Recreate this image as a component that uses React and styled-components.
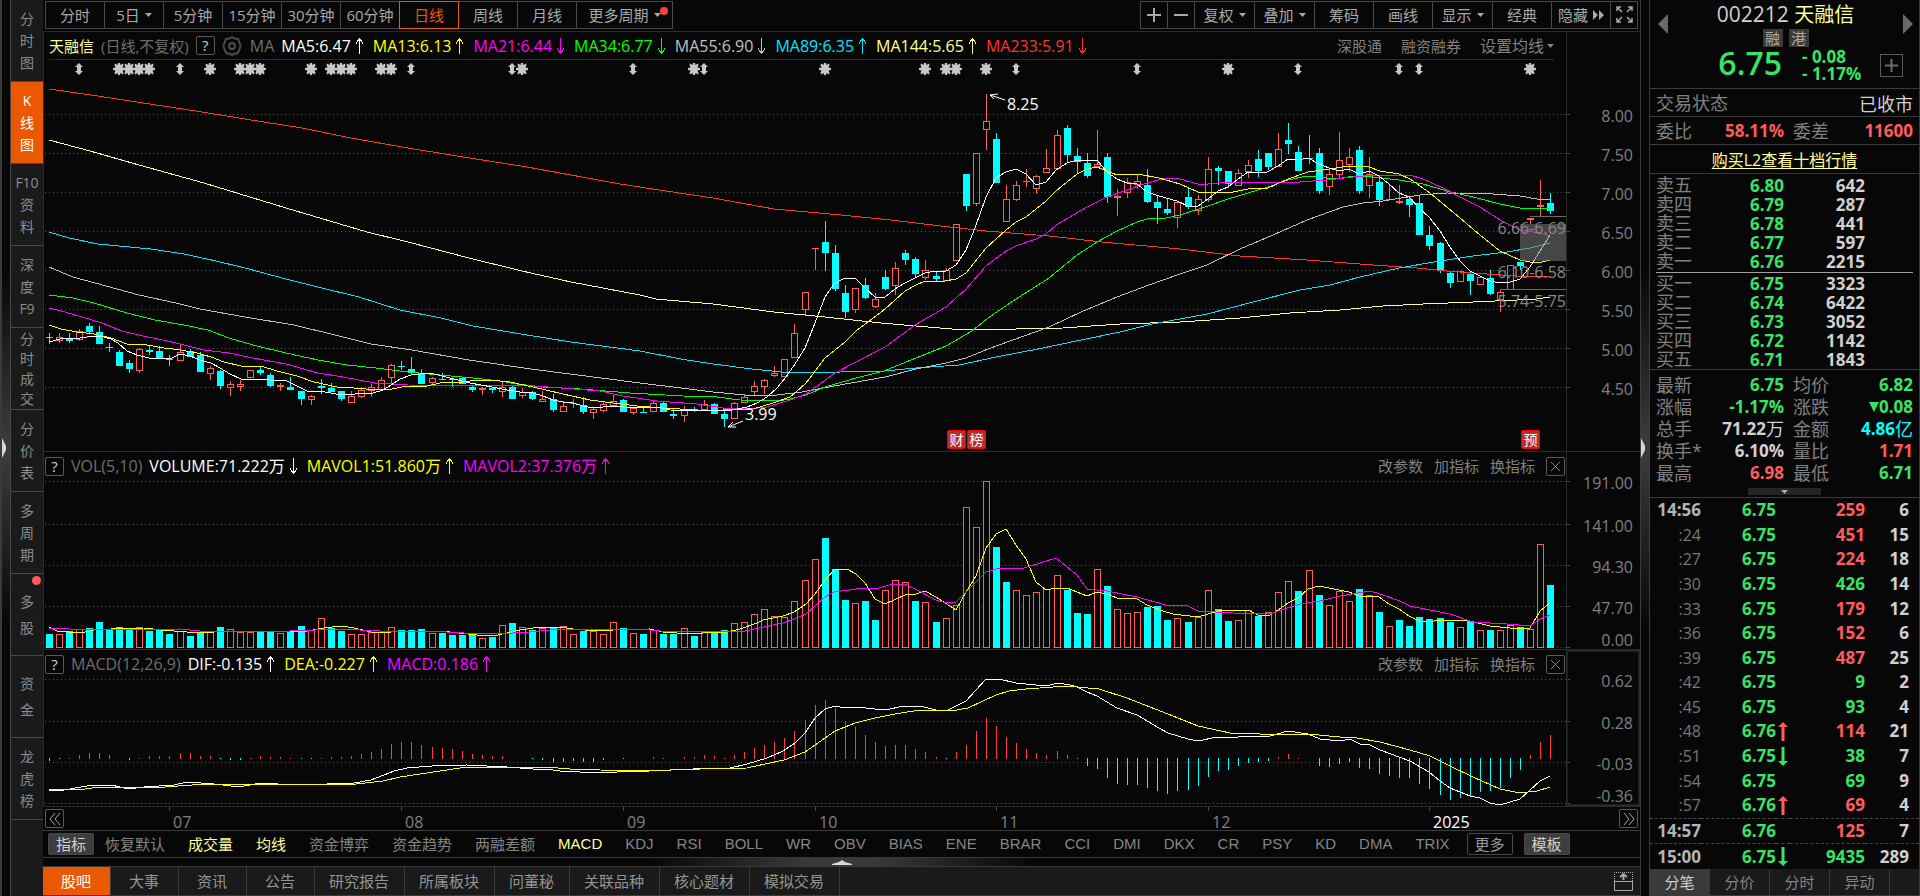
import React from 'react';
import styled, { createGlobalStyle, css } from 'styled-components';

const color = {
  bg: '#070707',
  panel: '#1a1a1a',
  line: '#2b2b2b',
  border: '#484848',
  text: '#a9a9a9',
  muted: '#808080',
  light: '#d0d0d0',
  white: '#ffffff',
  orange: '#eb5802',
  red: '#ff5c5c',
  green: '#3ae366',
  cyan: '#00ffff',
  yellow: '#ffff00',
  pale: '#ffff96',
  magenta: '#ff00ff',
};

// candles: [direction, high, body top, body bottom, low]
const CANDLES = `
d333,337,338,344 u333,337,341,343 d333,338,341,343 u329,331,340,341 d323,326,332,333 d326,332,344,344 d343,347,348,352
d350,352,366,366 d360,363,369,373 u348,349,371,373 d346,350,352,355 d346,351,358,359 d355,359,360,366 u344,352,361,361
d349,351,357,357 d352,355,372,372 u366,368,374,380 d370,371,386,389 u381,384,388,396 u380,384,387,391 u370,370,378,378
d366,370,373,375 d373,375,386,387 u383,385,387,391 d377,387,390,390 d391,391,399,405 u395,396,400,405 d379,386,388,394
d383,388,392,392 d391,391,399,401 u391,396,403,403 u387,390,397,398 u384,387,391,397 u377,380,390,390 u364,365,378,384
d361,366,367,370 d357,369,373,374 d369,373,384,384 u377,378,383,384 d373,379,380,380 d378,379,380,387 d378,378,384,384
d385,387,390,392 u387,388,390,395 d387,388,390,393 u382,387,392,397 d386,387,399,399 u388,392,396,398 d391,392,399,400
u391,399,402,402 d394,399,410,412 u401,406,412,412 u399,403,404,408 d397,405,412,414 u407,409,413,419 u402,404,411,412
u395,401,406,406 d399,400,412,412 u407,408,413,415 d406,412,413,413 u400,403,412,412 d402,403,412,412 d409,414,416,419
u406,409,416,422 d407,409,410,412 u400,404,410,410 d403,404,414,414 d411,414,419,427 u402,403,419,419 u395,397,403,403
u381,386,392,396 u379,380,387,394 u366,373,376,377 u359,359,377,377 u324,333,358,358 u292,292,310,315 u248,248,249,270
d221,242,253,271 d245,253,289,291 d285,293,312,318 u288,288,310,313 d278,285,298,299 u293,299,307,308 d270,277,289,290
u262,268,286,295 d250,253,260,265 d257,259,274,278 u260,270,278,280 d272,276,279,282 u268,270,281,281 u224,224,261,261
d174,174,206,211 u153,153,204,206 u94,121,130,150 d133,139,183,183 u185,199,222,222 u181,185,200,201 u169,181,182,187
u175,176,189,194 u149,168,173,173 u130,135,169,169 d125,128,155,163 d148,156,162,173 d153,163,176,178 u130,164,167,167
d153,157,197,203 u189,196,198,216 u178,182,193,198 u175,181,185,189 d169,185,202,203 d196,202,208,224 d198,209,213,215
u202,202,218,228 d187,197,207,209 u195,199,211,215 u157,169,200,202 d166,168,171,185 d171,171,184,188 u169,173,186,186
u160,165,172,178 d150,159,171,177 d153,153,167,170 u133,149,167,167 d123,140,144,154 d146,152,171,171 d135,158,159,164
d148,153,191,194 u169,174,187,195 u132,160,175,179 u148,157,165,172 d146,150,191,194 u157,174,186,198 d176,182,200,206
u185,199,200,200 u185,201,203,204 d197,199,205,217 d195,203,235,235 d226,235,246,250 d242,243,270,273 d272,273,283,288
u271,271,282,282 d272,274,281,295 u276,277,285,285 d270,278,294,295 u289,292,300,312 u265,265,290,290 d262,262,266,270
u218,218,220,224 u180,205,207,216 d193,203,211,214`
  .trim()
  .split(/\s+/)
  .map((s) => ({ up: s[0] === 'u', v: s.slice(1).split(',').map(Number) }));

const VOLUMES = [
  634, 634, 631, 629, 628, 622, 630, 627, 630, 627, 631, 630, 634, 631, 636, 632, 632, 627, 629, 632, 632, 631, 632, 633,
  632, 626, 630, 618, 628, 631, 634, 634, 632, 632, 627, 630, 630, 629, 633, 633, 635, 635, 635, 638, 637, 625, 623, 627,
  630, 628, 628, 626, 634, 631, 631, 634, 622, 628, 633, 634, 630, 634, 634, 628, 636, 632, 633, 630, 623, 622, 614, 609,
  616, 617, 601, 580, 559, 538, 569, 600, 603, 601, 620, 590, 580, 582, 601, 602, 622, 618, 605, 507, 527, 481, 547, 582,
  590, 595, 592, 589, 575, 590, 613, 614, 569, 586, 609, 613, 612, 607, 606, 620, 618, 622, 617, 590, 609, 621, 620, 610,
  616, 612, 592, 581, 591, 570, 595, 605, 591, 601, 589, 595, 612, 626, 620, 626, 617, 619, 618, 622, 627, 621, 630, 630,
  630, 625, 627, 629, 544, 585,
];

const VOLUME_DOWN = new Set([
  0, 2, 4, 5, 6, 7, 8, 10, 11, 12, 14, 15, 17, 21, 22, 24, 25, 28, 29, 35, 36, 37, 39, 40, 41, 42, 44, 46, 48, 50, 53, 57,
  59, 61, 62, 64, 66, 67, 77, 78, 79, 81, 82, 86, 88, 94, 95, 101, 102, 103, 105, 109, 110, 111, 113, 116, 117, 120, 124,
  126, 130, 132, 134, 135, 136, 137, 138, 139, 141, 143, 146, 149,
]);

const MACD_BARS = [
  -3, -1, 1, 4, 6, 6, 4, 0, -2, 1, 3, 3, 3, 6, 6, 3, 3, -1, -2, -2, 1, 3, 2, 2, 1, -1, -1, 1, 2, 2, 3, 5, 7, 10, 15, 17,
  17, 14, 12, 11, 10, 8, 5, 4, 3, 3, 0, 0, -1, -2, -4, -4, -3, -4, -4, -2, 0, -1, 0, 0, 2, 1, 0, 2, 2, 4, 3, 1, 4, 7, 11,
  14, 17, 21, 28, 39, 54, 59, 51, 38, 32, 24, 17, 13, 14, 14, 10, 7, 2, -1, 7, 14, 28, 41, 33, 22, 16, 10, 6, 4, 8, 4,
  -1, -8, -11, -20, -26, -27, -27, -30, -33, -36, -33, -32, -28, -19, -13, -12, -8, -5, -4, -3, 2, 5, 1, 0, -8, -9, -6,
  -4, -10, -11, -16, -18, -20, -20, -26, -31, -37, -42, -40, -38, -34, -33, -30, -20, -12, 4, 17, 24,
];

const PRICE_LINES = [
  {
    stroke: '#ff3232',
    d: '49,89 98,96 143,103 196,111 245,119 302,128 351,138 408,148 457,156 527,167 571,175 620,184 666,191 713,198 774,209 841,215 891,220 941,226 986,231 1049,236 1102,242 1180,249 1240,256 1307,260 1373,265 1417,268 1447,271 1487,274 1517,276 1550,277',
  },
  {
    stroke: '#ffff96',
    d: '49,140 90,151 139,165 204,183 286,208 367,232 408,242 469,258 522,271 571,282 640,295 656,299 713,304 774,312 825,317 881,323 916,326 952,329 1016,329 1063,328 1120,324 1180,322 1240,318 1290,313 1340,310 1383,306 1423,304 1473,302 1517,300 1537,299 1550,297',
  },
  {
    stroke: '#00e5ff',
    d: '49,232 69,238 98,244 151,249 184,254 216,261 245,268 286,279 318,287 359,297 400,310 441,318 473,326 527,335 571,342 640,351 681,359 713,364 752,369 791,373 841,372 884,371 916,368 959,365 996,357 1038,349 1081,340 1120,332 1152,324 1180,319 1207,314 1253,302 1300,290 1330,285 1360,277 1399,268 1440,261 1473,256 1507,252 1530,248 1550,243',
  },
  {
    stroke: '#c0c0c0',
    d: '49,267 73,277 106,286 139,295 176,303 200,309 245,317 294,325 335,335 371,344 412,350 469,360 531,369 640,383 681,388 713,392 745,395 777,395 802,392 834,386 885,377 916,369 946,363 966,358 988,349 1024,336 1049,327 1081,312 1117,297 1149,285 1180,274 1207,265 1240,249 1273,235 1307,220 1343,207 1363,203 1383,201 1420,195 1447,193 1493,194 1520,196 1537,199 1550,200',
  },
  {
    stroke: '#00ff00',
    d: '49,295 73,298 94,303 127,313 155,320 184,325 208,330 229,338 253,345 286,353 318,360 347,365 376,368 408,372 429,374 473,378 500,381 517,384 543,387 580,389 630,393 683,396 717,397 740,400 777,401 790,399 806,395 825,387 856,378 884,371 916,358 946,346 972,331 988,318 1016,299 1049,278 1077,255 1097,242 1117,231 1137,222 1147,219 1166,218 1180,215 1208,206 1228,199 1268,187 1288,180 1307,176 1337,179 1353,176 1373,177 1399,180 1423,184 1447,191 1473,197 1500,204 1520,208 1550,209',
  },
  {
    stroke: '#ff00ff',
    d: '49,308 65,312 82,317 102,323 122,331 143,336 163,340 184,345 204,350 229,353 253,358 286,364 318,373 343,377 375,383 408,385 535,386 600,391 623,396 657,401 697,404 723,408 750,409 767,407 790,400 806,394 835,373 856,362 885,347 915,325 946,307 966,289 986,266 1006,251 1016,246 1036,239 1046,234 1056,225 1087,207 1107,197 1127,190 1147,183 1166,178 1180,179 1198,184 1208,184 1228,182 1253,182 1268,183 1300,182 1327,180 1353,177 1373,175 1410,175 1423,179 1443,188 1460,197 1480,207 1500,220 1520,230 1540,233 1550,236',
  },
  {
    stroke: '#ffff00',
    d: '49,325 61,329 77,332 94,334 111,338 127,344 147,345 164,348 181,350 197,353 211,357 224,362 241,366 261,366 277,371 297,376 314,382 337,387 354,388 377,390 392,389 407,386 427,386 440,383 463,382 477,380 500,381 510,382 533,387 563,394 590,400 613,403 637,406 663,408 697,410 723,410 753,409 773,403 790,397 795,393 806,383 825,358 845,342 856,331 885,309 905,291 916,285 925,281 945,281 956,279 966,273 986,248 1006,230 1016,222 1026,217 1046,201 1056,191 1067,182 1077,174 1087,169 1097,167 1107,171 1117,175 1138,174 1159,178 1180,184 1198,192 1228,193 1248,189 1268,188 1288,179 1308,172 1329,169 1349,166 1369,167 1380,171 1399,174 1410,179 1430,193 1460,218 1480,235 1500,251 1520,260 1530,262 1542,262 1550,260',
  },
  {
    stroke: '#ffffff',
    d: '49,342 60,339 80,338 94,336 104,337 111,339 118,343 127,351 137,355 149,358 160,359 172,358 180,354 190,356 200,360 211,363 220,368 230,374 241,379 255,379 270,380 287,381 295,385 307,391 325,392 342,395 355,394 373,393 383,390 391,385 400,379 411,375 430,373 450,378 470,383 492,387 507,390 520,392 533,393 543,396 553,400 563,402 573,403 583,406 593,408 603,407 612,406 623,407 657,407 670,410 727,411 737,409 747,407 757,403 767,397 777,388 786,377 795,364 805,348 815,323 825,297 834,284 843,279 855,278 865,288 875,297 885,297 895,289 905,283 915,278 925,273 936,271 946,271 956,265 966,250 975,228 986,197 996,178 1006,172 1016,169 1026,174 1036,185 1046,182 1056,170 1067,163 1077,160 1097,160 1107,172 1117,179 1127,183 1137,184 1147,192 1159,196 1177,201 1188,206 1198,206 1208,199 1218,191 1228,187 1238,179 1248,172 1267,172 1278,166 1288,159 1298,160 1308,158 1319,164 1329,168 1339,171 1349,169 1359,174 1369,171 1379,176 1389,184 1399,193 1409,197 1419,208 1429,217 1440,231 1450,247 1460,261 1470,271 1480,276 1490,281 1500,283 1510,282 1520,279 1530,267 1540,251 1550,235',
  },
];

const VOLUME_LINES = [
  {
    stroke: '#ffff00',
    d: '49,627 57,631 81,633 94,630 111,629 144,628 161,630 187,632 197,633 214,632 231,631 264,631 287,632 307,631 324,628 341,626 354,628 371,632 382,633 401,631 432,631 450,632 477,635 493,636 507,633 520,630 540,627 560,627 573,629 597,631 613,630 650,629 663,632 677,633 703,633 727,632 740,629 757,623 763,620 783,616 794,612 806,604 815,594 825,580 835,569 847,569 856,574 865,583 875,599 885,604 905,595 916,594 925,591 936,597 956,610 966,592 976,576 986,548 996,534 1006,529 1016,545 1026,559 1036,582 1046,590 1056,588 1067,588 1087,596 1097,592 1107,594 1117,598 1137,599 1147,605 1163,611 1173,614 1198,617 1208,614 1218,611 1248,610 1258,615 1268,616 1278,610 1288,603 1298,598 1308,589 1319,586 1339,590 1349,592 1359,596 1379,597 1389,604 1399,609 1409,616 1419,621 1429,622 1440,620 1470,621 1490,626 1510,628 1530,628 1540,611 1550,603',
  },
  {
    stroke: '#ff00ff',
    d: '49,628 69,629 118,630 180,629 200,631 255,631 290,631 340,629 380,631 430,631 464,633 497,634 530,632 550,630 590,629 640,629 660,631 720,632 745,631 783,623 794,619 806,614 825,597 834,592 849,590 863,588 875,589 893,584 905,584 915,589 936,600 946,603 956,602 986,572 996,569 1024,568 1056,558 1077,575 1087,589 1107,591 1137,597 1166,605 1188,606 1198,611 1233,613 1270,614 1278,611 1300,604 1320,601 1340,596 1370,591 1380,594 1400,601 1410,606 1450,614 1473,622 1507,624 1530,626 1540,619 1550,615',
  },
];

const MACD_LINES = [
  {
    stroke: '#ffffff',
    d: '49,791 64,790 87,786 111,785 129,789 144,787 174,785 187,782 214,784 231,786 244,786 261,783 294,785 327,784 354,783 371,780 384,775 394,771 407,768 432,766 467,765 507,767 533,769 545,769 560,771 580,772 617,772 650,771 693,769 703,768 730,768 747,764 767,758 783,751 795,743 805,733 815,718 825,709 835,706 845,708 856,707 885,710 904,706 924,707 936,710 946,711 966,701 986,679 999,679 1016,683 1046,686 1058,683 1070,685 1077,687 1087,692 1097,696 1117,708 1137,715 1159,728 1168,733 1188,739 1198,741 1217,737 1230,738 1247,736 1270,736 1288,731 1308,734 1320,739 1340,741 1350,739 1360,744 1370,745 1380,750 1410,761 1429,772 1440,781 1450,788 1470,796 1480,798 1490,803 1500,805 1520,799 1530,790 1540,781 1550,776',
  },
  {
    stroke: '#ffff00',
    d: '49,789 85,789 100,787 165,787 205,784 320,784 356,784 383,781 400,777 420,774 440,771 460,768 480,767 545,767 570,769 600,770 640,771 700,769 747,768 765,764 784,760 805,752 825,738 835,731 855,723 875,718 895,714 920,710 957,710 968,708 996,695 1009,691 1026,689 1067,686 1099,689 1127,698 1173,716 1198,726 1230,733 1260,734 1308,734 1340,737 1357,738 1380,742 1410,750 1430,756 1450,766 1473,777 1500,789 1520,793 1537,791 1550,787',
  },
];

const STARS = [7, 8, 9, 10, 16, 19, 20, 21, 26, 28, 29, 30, 33, 34, 47, 64, 77, 87, 89, 90, 93, 117, 147];
const SWINGS = [3, 13, 36, 46, 58, 65, 96, 108, 124, 134, 136];

const RAIL = [
  ['分', '时', '图'],
  ['K', '线', '图'],
  ['F10', '资', '料'],
  ['深', '度', 'F9'],
  ['分', '时', '成', '交'],
  ['分', '价', '表'],
  ['多', '周', '期'],
  ['多', '股'],
  ['资', '金'],
  ['龙', '虎', '榜'],
];

const PERIODS = ['分时', '5日', '5分钟', '15分钟', '30分钟', '60分钟', '日线', '周线', '月线'];

const MA_VALUES = [
  ['MA5:6.47', 'up', '#ffffff'],
  ['MA13:6.13', 'up', '#ffff00'],
  ['MA21:6.44', 'down', '#ff00ff'],
  ['MA34:6.77', 'down', '#00ff00'],
  ['MA55:6.90', 'down', '#c0c0c0'],
  ['MA89:6.35', 'up', '#00e5ff'],
  ['MA144:5.65', 'up', '#ffff96'],
  ['MA233:5.91', 'down', '#ff3232'],
];

const VOL_VALUES = [
  ['VOLUME:71.222万', 'down', '#ffffff'],
  ['MAVOL1:51.860万', 'up', '#ffff00'],
  ['MAVOL2:37.376万', 'up', '#ff00ff'],
];

const MACD_VALUES = [
  ['DIF:-0.135', 'up', '#ffffff'],
  ['DEA:-0.227', 'up', '#ffff00'],
  ['MACD:0.186', 'up', '#ff00ff'],
];

const INDICATORS = [
  '恢复默认', '成交量', '均线', '资金博弈', '资金趋势', '两融差额', 'MACD', 'KDJ', 'RSI', 'BOLL', 'WR', 'OBV', 'BIAS', 'ENE',
  'BRAR', 'CCI', 'DMI', 'DKX', 'CR', 'PSY', 'KD', 'DMA', 'TRIX',
];
const ACTIVE_INDICATORS = ['成交量', '均线', 'MACD'];

const PAGES = ['股吧', '大事', '资讯', '公告', '研究报告', '所属板块', '问董秘', '关联品种', '核心题材', '模拟交易'];

const ASKS = [['卖五', '6.80', 642], ['卖四', '6.79', 287], ['卖三', '6.78', 441], ['卖二', '6.77', 597], ['卖一', '6.76', 2215]];
const BIDS = [['买一', '6.75', 3323], ['买二', '6.74', 6422], ['买三', '6.73', 3052], ['买四', '6.72', 1142], ['买五', '6.71', 1843]];

const TICKS = [
  ['14:56', '6.75', '', 259, 'red', 6],
  [':24', '6.75', '', 451, 'red', 15],
  [':27', '6.75', '', 224, 'red', 18],
  [':30', '6.75', '', 426, 'green', 14],
  [':33', '6.75', '', 179, 'red', 12],
  [':36', '6.75', '', 152, 'red', 6],
  [':39', '6.75', '', 487, 'red', 25],
  [':42', '6.75', '', 9, 'green', 2],
  [':45', '6.75', '', 93, 'green', 4],
  [':48', '6.76', 'up', 114, 'red', 21],
  [':51', '6.75', 'down', 38, 'green', 7],
  [':54', '6.75', '', 69, 'green', 9],
  [':57', '6.76', 'up', 69, 'red', 4],
  ['14:57', '6.76', '', 125, 'red', 7],
  ['15:00', '6.75', 'down', 9435, 'green', 289],
];

const barX = (i) => Math.floor(49.001 + i * 10.08);

const Lines = ({ items }) =>
  items.map((l) => (
    <polyline key={l.stroke} points={l.d} fill="none" stroke={l.stroke} shapeRendering="crispEdges" />
  ));

const Grid = ({ rows }) =>
  rows.map((y) => (
    <line key={y} x1="45" x2="1567" y1={y + 0.5} y2={y + 0.5} stroke="#565656" strokeDasharray="1 3" shapeRendering="crispEdges" />
  ));

const Axis = ({ height, top, labels, boxed }) => (
  <AxisBox $boxed={boxed}>
    <svg width="100%" height={height} overflow="visible">
      <g transform={`translate(0 ${-top})`}>
        {labels.map(([text, y, tick]) => (
          <React.Fragment key={text}>
            <rect x="0" y={tick} width="3" height="1" fill="#484848" />
            <text x="66" y={y + 5} textAnchor="end" fill="#808080" fontSize="16">{text}</text>
          </React.Fragment>
        ))}
      </g>
    </svg>
  </AxisBox>
);

const Trend = ({ dir }) => (
  <svg width="9" height="18" viewBox="0 0 9 18" fill="none" stroke="currentColor" shapeRendering="crispEdges">
    {dir === 'up' ? <path d="M4.5 17V1M4.5 1L1 7M4.5 1L8 7" /> : <path d="M4.5 1V17M4.5 17L1 11M4.5 17L8 11" />}
  </svg>
);

const Caret = () => (
  <svg width="7" height="4" viewBox="0 0 7 4"><path d="M0 0H7L3.5 4Z" fill="currentColor" /></svg>
);

const Gear = () => (
  <svg width="20" height="20" viewBox="0 0 20 20" fill="none" stroke="#4c4c4c" strokeWidth="2">
    <path d="M7.500 2.500 Q10 0 12.500 2.500 Q17 2 17 6 Q20 10 17 14 Q17 18 12.500 17.500 Q10 20 7.500 17.500 Q3 18 3 14 Q0 10 3 6 Q3 2 7.500 2.500Z" />
    <circle cx="10" cy="10" r="3" />
  </svg>
);

const Close = () => (
  <svg width="11" height="11" viewBox="0 0 11 11" stroke="currentColor"><path d="M1 1L10 10M10 1L1 10" /></svg>
);

const PriceChart = () => (
  <Plot height="391" role="img" aria-label="日线 K线图">
    <g transform="translate(-44 -60)">
      <Grid rows={[114, 153, 192, 231, 270, 309, 348, 387]} />
      {STARS.map((i) => (
        <path
          key={i}
          transform={`translate(${barX(i)} 69)`}
          d="M-1 -6H1L1.500 -4L4 -5.500L4.500 -4L3.500 -1.500L6 -1V1L3.500 1.500L4.500 4L4 5.500L1.500 4L1 6H-1L-1.500 4L-4 5.500L-4.500 4L-3.500 1.500L-6 1V-1L-3.500 -1.500L-4.500 -4L-4 -5.500L-1.500 -4Z"
          fill="#c8c8c8"
        />
      ))}
      {SWINGS.map((i) => (
        <path key={i} transform={`translate(${barX(i)} 69)`} d="M0 -6L4 -2H2V2H4L0 6L-4 2H-2V-2H-4Z" fill="#c8c8c8" />
      ))}
      <g shapeRendering="crispEdges">
        {CANDLES.map(({ up, v: [high, top, bottom, low] }, i) => {
          const x = barX(i);
          if (!up) {
            return (
              <g key={i} fill={color.cyan}>
                <rect x={x} y={high} width="1" height={low - high} />
                <rect x={x - 3} y={top} width="7" height={bottom - top} />
              </g>
            );
          }
          return (
            <g key={i} fill={color.red}>
              <rect x={x} y={high} width="1" height={top - high} />
              <rect x={x} y={bottom} width="1" height={low - bottom} />
              {bottom - top > 2 ? (
                <rect x={x - 2.5} y={top + 0.5} width="6" height={bottom - top - 1} fill="none" stroke={color.red} />
              ) : (
                <rect x={x - 3} y={top} width="7" height={bottom - top} />
              )}
            </g>
          );
        })}
      </g>
      <Lines items={PRICE_LINES} />
      <rect x="1520" y="224" width="47" height="37" fill="#7a7a7a" opacity="0.55" />
      <path d="M1530 216.500H1567M1500 289.500H1567" stroke="#6a6a6a" />
      <g fill="#888888" fontSize="16" textAnchor="end">
        <text x="1566" y="234">6.66-6.69</text>
        <text x="1566" y="278">6.10-6.58</text>
        <text x="1566" y="307">5.74-5.75</text>
      </g>
      <path d="M1005 100L990 95M998 94L990 95L994 99M743 421L728 427M736 427L728 427L733 422" stroke="#fff" fill="none" />
      <g fill="#fff" fontSize="16">
        <text x="1007" y="110">8.25</text>
        <text x="745" y="420">3.99</text>
      </g>
      {[['财', 947], ['榜', 967], ['预', 1521]].map(([t, x]) => (
        <g key={t}>
          <rect x={x + 0.5} y="430.500" width="18" height="18" rx="1" fill="#c02a2a" stroke="#f00000" />
          <text x={x + 9.5} y="445" fill="#fff" fontSize="14" textAnchor="middle">{t}</text>
        </g>
      ))}
    </g>
  </Plot>
);

const VolumeChart = () => (
  <Plot height="169" role="img" aria-label="成交量">
    <g transform="translate(-44 -480)">
      <Grid rows={[481, 524, 565, 606, 647]} />
      <g shapeRendering="crispEdges">
        {VOLUMES.map((y, i) =>
          VOLUME_DOWN.has(i) ? (
            <rect key={i} x={barX(i) - 3} y={y} width="7" height={648 - y} fill={color.cyan} />
          ) : (
            <rect key={i} x={barX(i) - 2.5} y={y + 0.5} width="6" height={647 - y} fill={color.bg} stroke={color.red} />
          )
        )}
      </g>
      <Lines items={VOLUME_LINES} />
    </g>
  </Plot>
);

const MacdChart = () => (
  <Plot height="128" role="img" aria-label="MACD">
    <g transform="translate(-44 -678)">
      <Grid rows={[679, 721, 762, 803]} />
      <g shapeRendering="crispEdges">
        {MACD_BARS.map((v, i) => (
          <rect
            key={i}
            x={barX(i)}
            y={v > 0 ? 759 - v : 758}
            width="1"
            height={Math.abs(v)}
            fill={v > 0 ? '#ff3c3c' : color.cyan}
          />
        ))}
      </g>
      <Lines items={MACD_LINES} />
    </g>
  </Plot>
);

const Values = ({ items }) =>
  items.map(([text, dir, tone]) => (
    <Value key={text} $tone={tone}>
      {text}
      <Trend dir={dir} />
    </Value>
  ));

const SubHeader = ({ title, items }) => (
  <ChartHeader>
    <SmallBox type="button" aria-label="帮助">?</SmallBox>
    <Label $latin>{title}</Label>
    <Values items={items} />
    <HeaderActions $gap={11}>
      <TextButton type="button">改参数</TextButton>
      <TextButton type="button">加指标</TextButton>
      <TextButton type="button">换指标</TextButton>
      <SmallBox type="button" aria-label="关闭" $dim><Close /></SmallBox>
    </HeaderActions>
  </ChartHeader>
);

const Sidebar = () => (
  <Rail>
    {RAIL.map((chars, i) => (
      <RailItem key={i} type="button" $active={i === 1} $count={chars.length}>
        {chars.map((c, n) => <span key={n}>{c}</span>)}
        {i === 7 && <Dot />}
      </RailItem>
    ))}
  </Rail>
);

const Toolbar = () => (
  <ToolbarRow>
    <ToolGroup>
      {PERIODS.map((p) => (
        <Tool key={p} type="button" $w={59} $active={p === '日线'}>
          {p}
          {p === '5日' && <Caret />}
        </Tool>
      ))}
      <Tool type="button" $w={96}>更多周期<Caret /><Badge /></Tool>
    </ToolGroup>
    <ToolGroup>
      <Tool type="button" $w={27} aria-label="放大">
        <svg width="14" height="14" stroke="currentColor" strokeWidth="2"><path d="M7 0V14M0 7H14" /></svg>
      </Tool>
      <Tool type="button" $w={27} aria-label="缩小">
        <svg width="14" height="14" stroke="currentColor" strokeWidth="2"><path d="M0 7H14" /></svg>
      </Tool>
      <Tool type="button" $w={60}>复权<Caret /></Tool>
      <Tool type="button" $w={60}>叠加<Caret /></Tool>
      <Tool type="button" $w={59}>筹码</Tool>
      <Tool type="button" $w={59}>画线</Tool>
      <Tool type="button" $w={60}>显示<Caret /></Tool>
      <Tool type="button" $w={59}>经典</Tool>
      <Tool type="button" $w={59}>
        隐藏
        <svg width="11" height="10"><path d="M0 0L5 5L0 10ZM6 0L11 5L6 10Z" fill="currentColor" /></svg>
      </Tool>
      <Tool type="button" $w={27} aria-label="全屏">
        <svg width="17" height="17" fill="none" stroke="currentColor" strokeWidth="1.500">
          <path d="M1 5V1H5M1 1L6 6M12 1H16V5M16 1L11 6M1 12V16H5M1 16L6 11M16 12V16H12M16 16L11 11" />
        </svg>
      </Tool>
    </ToolGroup>
  </ToolbarRow>
);

const DateAxis = () => (
  <DateRow>
    <StepButton type="button" aria-label="向前">
      <svg width="12" height="14" fill="none" stroke="currentColor"><path d="M6 1L1 7L6 13M11 1L6 7L11 13" /></svg>
    </StepButton>
    <DateSvg height="24">
      <g transform="translate(-64 0)" fill="#808080" fontSize="16">
        {[['07', 169], ['08', 401], ['09', 623], ['10', 815], ['11', 996], ['12', 1208], ['2025', 1429]].map(([t, x]) => (
          <g key={t}>
            <rect x={x} y="0" width="1" height="4" fill="#484848" />
            <text x={x + 4} y="21" fill={t === '2025' ? '#fff' : '#808080'}>{t}</text>
          </g>
        ))}
      </g>
    </DateSvg>
    <StepButton type="button" aria-label="向后">
      <svg width="12" height="14" fill="none" stroke="currentColor"><path d="M1 1L6 7L1 13M6 1L11 7L6 13" /></svg>
    </StepButton>
  </DateRow>
);

const Depth = ({ rows }) => (
  <DepthTable>
    <tbody>
      {rows.map(([name, price, qty]) => (
        <tr key={name}>
          <th scope="row">{name}</th>
          <td>{price}</td>
          <td>{qty}</td>
        </tr>
      ))}
    </tbody>
  </DepthTable>
);

const Quote = () => (
  <QuotePanel>
    <QuoteHead>
      <Step type="button" aria-label="上一只">
        <svg width="10" height="20"><path d="M10 0V20L0 10Z" fill="currentColor" /></svg>
      </Step>
      <QuoteTitle>
        <h1>002212 <b>天融信</b></h1>
        <Tags><span>融</span><span>港</span></Tags>
      </QuoteTitle>
      <Step type="button" aria-label="下一只">
        <svg width="10" height="20"><path d="M0 0V20L10 10Z" fill="currentColor" /></svg>
      </Step>
      <PriceLine>
        <strong>6.75</strong>
        <Change><span>- 0.08</span><span>- 1.17%</span></Change>
        <AddButton type="button" aria-label="加自选">
          <svg width="13" height="13" stroke="currentColor" strokeWidth="2"><path d="M6.500 0V13M0 6.500H13" /></svg>
        </AddButton>
      </PriceLine>
    </QuoteHead>
    <InfoRow>
      <Name>交易状态</Name>
      <Status>已收市</Status>
    </InfoRow>
    <InfoRow $pair>
      <Name>委比</Name>
      <Num $tone={color.red}>58.11%</Num>
      <Name>委差</Name>
      <Num $tone={color.red}>11600</Num>
    </InfoRow>
    <InfoRow $center>
      <a href="#level2">购买L2查看十档行情</a>
    </InfoRow>
    <DepthBox>
      <Depth rows={ASKS} />
      <hr />
      <Depth rows={BIDS} />
    </DepthBox>
    <Stats>
      <Name>最新</Name><Num $tone={color.green}>6.75</Num>
      <Name>均价</Name><Num $tone={color.green}>6.82</Num>
      <Name>涨幅</Name><Num $tone={color.green}>-1.17%</Num>
      <Name>涨跌</Name>
      <Num $tone={color.green}>
        <svg width="10" height="10"><path d="M0 0H10L5 10Z" fill="currentColor" /></svg>0.08
      </Num>
      <Name>总手</Name><Num $tone={color.light}>71.22<i>万</i></Num>
      <Name>金额</Name><Num $tone={color.cyan}>4.86<i>亿</i></Num>
      <Name>换手*</Name><Num $tone={color.light}>6.10%</Num>
      <Name>量比</Name><Num $tone={color.red}>1.71</Num>
      <Name>最高</Name><Num $tone={color.red}>6.98</Num>
      <Name>最低</Name><Num $tone={color.green}>6.71</Num>
      <Fold type="button" aria-label="展开"><Caret /></Fold>
    </Stats>
    <TickBox>
      <TickTable>
        <tbody>
          {TICKS.map(([time, price, dir, vol, tone, count]) => (
            <TickRow key={time} $ruled={time === '14:57' || time === '15:00'}>
              <TimeCell $major={time.length > 3}>{time}</TimeCell>
              <td>{price}</td>
              <ArrowCell $tone={dir === 'up' ? color.red : color.green}>
                {dir && (
                  <svg width="10" height="19" fill="currentColor">
                    {dir === 'up' ? <path d="M5 0L10 5H6.500V19H3.500V5H0Z" /> : <path d="M5 19L10 14H6.500V0H3.500V14H0Z" />}
                  </svg>
                )}
              </ArrowCell>
              <VolCell $tone={color[tone]}>{vol}</VolCell>
              <CountCell>{count}</CountCell>
            </TickRow>
          ))}
        </tbody>
      </TickTable>
    </TickBox>
    <QuoteTabs>
      {['分笔', '分价', '分时', '异动'].map((t, i) => (
        <QuoteTab key={t} type="button" $active={i === 0}>{t}</QuoteTab>
      ))}
    </QuoteTabs>
  </QuotePanel>
);

const App = () => {
  return (
    <>
      <GlobalStyle />
      <Screen>
        <Gutter $left>
          <svg width="5" height="20"><path d="M0 0L4 8V12L0 20Z" fill="#d8d8d8" /></svg>
        </Gutter>
        <Sidebar />
        <Main>
          <Toolbar />
          <Panel>
            <PlotSide>
              <ChartHeader $ruled>
                <StockName>天融信</StockName>
                <Label>(日线,不复权)</Label>
                <SmallBox type="button" aria-label="帮助">?</SmallBox>
                <GearButton type="button" aria-label="设置"><Gear /></GearButton>
                <Label $latin>MA</Label>
                <Values items={MA_VALUES} />
                <HeaderActions $gap={19} $inset>
                  <TextButton type="button">深股通</TextButton>
                  <TextButton type="button">融资融券</TextButton>
                  <TextButton type="button" $large>设置均线<Caret /></TextButton>
                </HeaderActions>
              </ChartHeader>
              <PriceChart />
            </PlotSide>
            <Axis
              height={419}
              top={32}
              labels={[
                ['8.00', 117, 114], ['7.50', 156, 153], ['7.00', 195, 192], ['6.50', 234, 231],
                ['6.00', 273, 270], ['5.50', 312, 309], ['5.00', 351, 348], ['4.50', 390, 387],
              ]}
            />
          </Panel>
          <Panel>
            <PlotSide>
              <SubHeader title="VOL(5,10)" items={VOL_VALUES} />
              <VolumeChart />
            </PlotSide>
            <Axis
              height={197}
              top={452}
              labels={[
                ['191.00', 484, 481], ['141.00', 527, 524], ['94.30', 568, 565], ['47.70', 609, 606], ['0.00', 641, 647],
              ]}
            />
          </Panel>
          <Panel>
            <PlotSide>
              <SubHeader title="MACD(12,26,9)" items={MACD_VALUES} />
              <MacdChart />
            </PlotSide>
            <Axis
              boxed
              height={154}
              top={651}
              labels={[['0.62', 682, 679], ['0.28', 724, 721], ['-0.03', 765, 762], ['-0.36', 797, 803]]}
            />
          </Panel>
          <DateAxis />
          <IndicatorRow>
            <Chip type="button" $filled>指标</Chip>
            <IndicatorList>
              {INDICATORS.map((t) => (
                <Indicator key={t} type="button" $active={ACTIVE_INDICATORS.includes(t)}>{t}</Indicator>
              ))}
            </IndicatorList>
            <Chip type="button">更多</Chip>
            <Chip type="button" $filled>模板</Chip>
          </IndicatorRow>
          <Drawer>
            <svg width="20" height="5"><path d="M0 5V4L7 2L10 0L13 2L20 4V5Z" fill="#d8d8d8" /></svg>
          </Drawer>
          <PageTabs>
            {PAGES.map((t, i) => (
              <PageTab key={t} type="button" $active={i === 0}>{t}</PageTab>
            ))}
            <PopOut type="button" aria-label="弹出">
              <svg width="21" height="21" fill="none" stroke="currentColor">
                <path d="M1.500 10V1.500H19.500V10" strokeDasharray="1 1" />
                <path d="M1.500 10.500H19.500V19.500H1.500Z" />
                <path d="M10.500 9V4M7 6L10.500 3L14 6" strokeWidth="2" />
              </svg>
            </PopOut>
          </PageTabs>
        </Main>
        <Gutter>
          <svg width="5" height="20"><path d="M0 0L4 8V12L0 20Z" fill="#d8d8d8" /></svg>
        </Gutter>
        <Quote />
      </Screen>
    </>
  );
};

const GlobalStyle = createGlobalStyle`
  * {
    box-sizing: border-box;
  }
  body {
    margin: 0;
    background: ${color.bg};
    color: ${color.text};
    font-family: "Open Sans", "Noto Sans CJK SC", sans-serif;
    font-size: 15px;
  }
  button {
    margin: 0;
    padding: 0;
    border: none;
    background: none;
    color: inherit;
    font: inherit;
    cursor: pointer;
  }
  svg {
    display: block;
    flex: none;
  }
`;

const Screen = styled.div`
  display: grid;
  grid-template-columns: 10px 33px minmax(0, 1fr) 10px 270px;
  min-height: 100vh;
`;

const Gutter = styled.div`
  display: flex;
  align-items: center;
  border-left: ${({ $left }) => ($left ? '2px solid #3a3a3a' : '1px solid #3c3c3c')};
  border-right: ${({ $left }) => ($left ? 'none' : '1px solid #3c3c3c')};
  background: linear-gradient(#070707 30%, #3a3a3a 49%, #3a3a3a 51%, #070707 70%);
`;

const Rail = styled.nav`
  display: flex;
  flex-direction: column;
  border-left: 1px solid ${color.border};
  background: ${color.panel};
`;

const RailItem = styled.button`
  position: relative;
  display: flex;
  flex-direction: column;
  align-items: center;
  justify-content: center;
  height: 82px;
  border-bottom: 1px solid ${color.border};
  color: ${({ $active }) => ($active ? color.white : '#8c8c8c')};
  background: ${({ $active }) => ($active ? color.orange : 'none')};
  font-size: 14px;
  line-height: ${({ $count }) => ({ 2: 26, 3: 22, 4: 20 })[$count]}px;
`;

const Dot = styled.i`
  position: absolute;
  top: 2px;
  right: 2px;
  width: 9px;
  height: 9px;
  border-radius: 50%;
  background: ${color.red};
`;

const Main = styled.main`
  display: flex;
  flex-direction: column;
  min-width: 0;
`;

const ToolbarRow = styled.div`
  display: flex;
  justify-content: space-between;
  height: 31px;
  padding: 1px 3px 2px 2px;
`;

const ToolGroup = styled.div`
  display: flex;
`;

const Tool = styled.button`
  position: relative;
  display: flex;
  align-items: center;
  justify-content: center;
  gap: 5px;
  width: ${({ $w }) => $w + 1}px;
  height: 28px;
  margin-right: -1px;
  padding-bottom: 1px;
  border: 1px solid ${({ $active }) => ($active ? color.orange : color.border)};
  color: ${({ $active }) => ($active ? color.orange : color.text)};
  z-index: ${({ $active }) => ($active ? 1 : 0)};
  white-space: nowrap;
`;

const Badge = styled.i`
  position: absolute;
  top: 5px;
  right: 4px;
  width: 8px;
  height: 8px;
  border-radius: 50%;
  background: #ff4040;
`;

const Panel = styled.section`
  display: flex;
  border-top: 1px solid ${color.line};
  border-left: 1px solid ${color.line};
`;

const PlotSide = styled.div`
  flex: 1;
  min-width: 0;
`;

const Plot = styled.svg`
  width: 100%;
  overflow: hidden;
`;

const AxisBox = styled.div`
  width: 74px;
  border-left: 1px solid ${color.line};
  ${({ $boxed }) => $boxed && css`
    border: 1px solid ${color.line};
    outline: 1px solid #1d1d1d;
    outline-offset: -2px;
  `}
`;

const ChartHeader = styled.header`
  display: flex;
  align-items: center;
  gap: 7px;
  height: 28px;
  padding-left: 1px;
  ${({ $ruled }) => $ruled && css`
    margin: 0 12px 0 5px;
    padding-left: 0;
    border-bottom: 1px solid ${color.line};
  `}
`;

const Label = styled.span`
  color: #6e6e6e;
  font-size: ${({ $latin }) => ($latin ? 16 : 15)}px;
  white-space: nowrap;
`;

const StockName = styled.span`
  color: ${color.pale};
`;

const Value = styled.span`
  display: flex;
  align-items: center;
  gap: 4px;
  margin-right: 2px;
  color: ${({ $tone }) => $tone};
  font-size: 16px;
  line-height: 20px;
  white-space: nowrap;
`;

const SmallBox = styled.button`
  display: flex;
  align-items: center;
  justify-content: center;
  width: 19px;
  height: 19px;
  border: 1px solid #5a5a5a;
  border-radius: 2px;
  color: ${({ $dim }) => ($dim ? color.muted : color.light)};
  line-height: 17px;
`;

const GearButton = styled.button`
  margin-right: 1px;
`;

const HeaderActions = styled.div`
  display: flex;
  align-items: center;
  gap: ${({ $gap }) => $gap}px;
  margin-left: auto;
  padding-right: ${({ $inset }) => ($inset ? 0 : 1)}px;
`;

const TextButton = styled.button`
  display: flex;
  align-items: center;
  gap: 3px;
  color: ${color.muted};
  font-size: ${({ $large }) => ($large ? 16 : 15)}px;
  line-height: 20px;
`;

const DateRow = styled.div`
  display: flex;
  align-items: center;
  height: 24px;
  padding: 0 2px;
  border-top: 1px solid ${color.line};
`;

const DateSvg = styled.svg`
  flex: 1;
  min-width: 0;
`;

const StepButton = styled.button`
  display: flex;
  align-items: center;
  justify-content: center;
  width: 19px;
  height: 19px;
  border: 1px solid #5a5a5a;
  border-radius: 2px;
`;

const IndicatorRow = styled.div`
  display: flex;
  align-items: center;
  gap: 11px;
  height: 27px;
  padding-left: 5px;
  border-top: 1px solid #3a3a3a;
`;

const IndicatorList = styled.div`
  display: flex;
  gap: 23px;
  padding: 0 6px 2px 0;
`;

const Indicator = styled.button`
  color: ${({ $active }) => ($active ? color.pale : '#858585')};
  font-family: "Liberation Sans", "Noto Sans CJK SC", sans-serif;
  white-space: nowrap;
`;

const Chip = styled.button`
  width: 46px;
  height: 22px;
  border: 1px solid ${color.border};
  border-radius: 2px;
  background: ${({ $filled }) => ($filled ? '#3e3e3e' : 'none')};
  color: ${({ $filled }) => ($filled ? color.light : '#999999')};
  line-height: 18px;
`;

const Drawer = styled.div`
  display: flex;
  align-items: center;
  justify-content: center;
  height: 9px;
  border-top: 1px solid #3a3a3a;
  background: linear-gradient(90deg, #070707 38%, #3a3a3a 48%, #3a3a3a 52%, #070707 62%);
`;

const PageTabs = styled.div`
  display: flex;
  flex: 1;
  min-height: 30px;
  border-top: 1px solid #3a3a3a;
  border-bottom: 1px solid #3a3a3a;
  background: ${color.panel};
`;

const PageTab = styled.button`
  min-width: 68px;
  padding: 0 15px 2px 14px;
  border-right: 1px solid #3a3a3a;
  background: ${({ $active }) => ($active ? color.orange : 'none')};
  color: ${({ $active }) => ($active ? color.white : '#959595')};
`;

const PopOut = styled.button`
  margin: auto 6px auto auto;
`;

const QuotePanel = styled.aside`
  display: flex;
  flex-direction: column;
  border-right: 1px solid #3a3a3a;
`;

const QuoteHead = styled.header`
  display: grid;
  grid-template-columns: 10px 1fr 10px;
  align-items: center;
  align-content: start;
  height: 89px;
  padding: 0 6px 0 8px;
  border-bottom: 1px solid #3a3a3a;
`;

const Step = styled.button`
  color: #6a6a6a;
`;

const QuoteTitle = styled.div`
  display: flex;
  flex-direction: column;
  align-items: center;
  h1 {
    margin: 0;
    color: ${color.light};
    font-size: 21px;
    font-weight: 400;
    line-height: 29px;
  }
  b {
    color: ${color.pale};
    font-size: 20px;
    font-weight: 400;
  }
`;

const Tags = styled.div`
  display: flex;
  gap: 6px;
  span {
    width: 20px;
    background: #3a3a3a;
    color: ${color.text};
    text-align: center;
    line-height: 18px;
  }
`;

const PriceLine = styled.div`
  display: flex;
  grid-column: 1 / -1;
  align-items: center;
  justify-content: flex-end;
  height: 36px;
  padding-right: 10px;
  color: ${color.green};
  strong {
    margin-right: 20px;
    padding-bottom: 4px;
    font-size: 32px;
    font-weight: 600;
    line-height: 32px;
  }
`;

const Change = styled.div`
  display: flex;
  flex-direction: column;
  width: 78px;
  font-size: 17px;
  font-weight: 700;
  line-height: 17px;
`;

const AddButton = styled.button`
  display: flex;
  align-items: center;
  justify-content: center;
  width: 23px;
  height: 23px;
  border: 1px solid #5a5a5a;
  color: #6a6a6a;
`;

const InfoRow = styled.div`
  display: flex;
  align-items: center;
  justify-content: space-between;
  height: ${({ $center }) => ($center ? 29 : 28)}px;
  padding: 0 6px;
  border-bottom: 1px solid #3a3a3a;
  ${({ $pair }) => $pair && css`
    display: grid;
    grid-template-columns: 54px 74px 54px 1fr;
    > :nth-child(3) {
      padding-left: 9px;
    }
  `}
  ${({ $center }) => $center && css`
    justify-content: center;
  `}
  a {
    color: ${color.pale};
    font-size: 16px;
    text-underline-offset: 2px;
  }
`;

const Name = styled.span`
  color: ${color.muted};
  font-size: 18px;
  line-height: 22px;
  white-space: nowrap;
`;

const Status = styled.span`
  color: ${color.light};
  font-size: 18px;
`;

const Num = styled.span`
  display: flex;
  align-items: center;
  justify-content: flex-end;
  color: ${({ $tone }) => $tone};
  font-size: 17px;
  font-weight: 700;
  line-height: 22px;
  i {
    font-size: 18px;
    font-style: normal;
    font-weight: 400;
  }
`;

const DepthBox = styled.div`
  padding: 2px 6px 0;
  border-bottom: 1px solid #3a3a3a;
  hr {
    height: 1px;
    margin: 1px 0;
    border: none;
    background: #a0a0a0;
  }
`;

const DepthTable = styled.table`
  width: 209px;
  border-collapse: collapse;
  th {
    padding: 0;
    color: ${color.muted};
    font-size: 18px;
    font-weight: 400;
    line-height: 19px;
    text-align: left;
  }
  td {
    padding: 0;
    width: 81px;
    color: ${color.light};
    font-size: 17px;
    font-weight: 700;
    line-height: 19px;
    text-align: right;
  }
  td:nth-child(2) {
    color: ${color.green};
  }
`;

const Stats = styled.div`
  display: grid;
  grid-template-columns: 54px 74px 54px 1fr;
  padding: 4px 6px 0;
  border-bottom: 1px solid #3a3a3a;
  > :nth-child(4n + 3) {
    padding-left: 9px;
  }
`;

const Fold = styled.button`
  display: flex;
  grid-column: 1 / -1;
  align-items: center;
  justify-content: center;
  justify-self: center;
  width: 73px;
  height: 7px;
  margin: 4px 0 2px;
  background: #252525;
`;

const TickBox = styled.div`
  flex: 1;
`;

const TickTable = styled.table`
  width: 100%;
  height: 100%;
  border-collapse: collapse;
  td {
    padding: 0;
    color: ${color.green};
    font-size: 17px;
    font-weight: 700;
    line-height: 22px;
    text-align: right;
  }
`;

const TickRow = styled.tr`
  border-top: ${({ $ruled }) => ($ruled ? '1px dashed #484848' : 'none')};
`;

const TimeCell = styled.td`
  && {
    width: 51px;
    color: ${({ $major }) => ($major ? '#b4b4b4' : '#787878')};
    font-size: ${({ $major }) => ($major ? 17 : 16)}px;
    font-weight: ${({ $major }) => ($major ? 700 : 400)};
  }
  & + td {
    width: 75px;
  }
`;

const ArrowCell = styled.td`
  && {
    width: 14px;
    padding-left: 2px;
    color: ${({ $tone }) => $tone};
  }
`;

const VolCell = styled.td`
  && {
    width: 75px;
    color: ${({ $tone }) => $tone};
  }
`;

const CountCell = styled.td`
  && {
    padding-right: 10px;
    color: ${color.light};
  }
`;

const QuoteTabs = styled.div`
  display: flex;
  height: 27px;
  border-bottom: 1px solid #3a3a3a;
  background: ${color.panel};
`;

const QuoteTab = styled.button`
  width: 60px;
  padding-bottom: 2px;
  border-right: 1px solid #3a3a3a;
  background: ${({ $active }) => ($active ? '#3a3a3a' : 'none')};
  color: ${({ $active }) => ($active ? color.light : '#858585')};
`;

export default App;
